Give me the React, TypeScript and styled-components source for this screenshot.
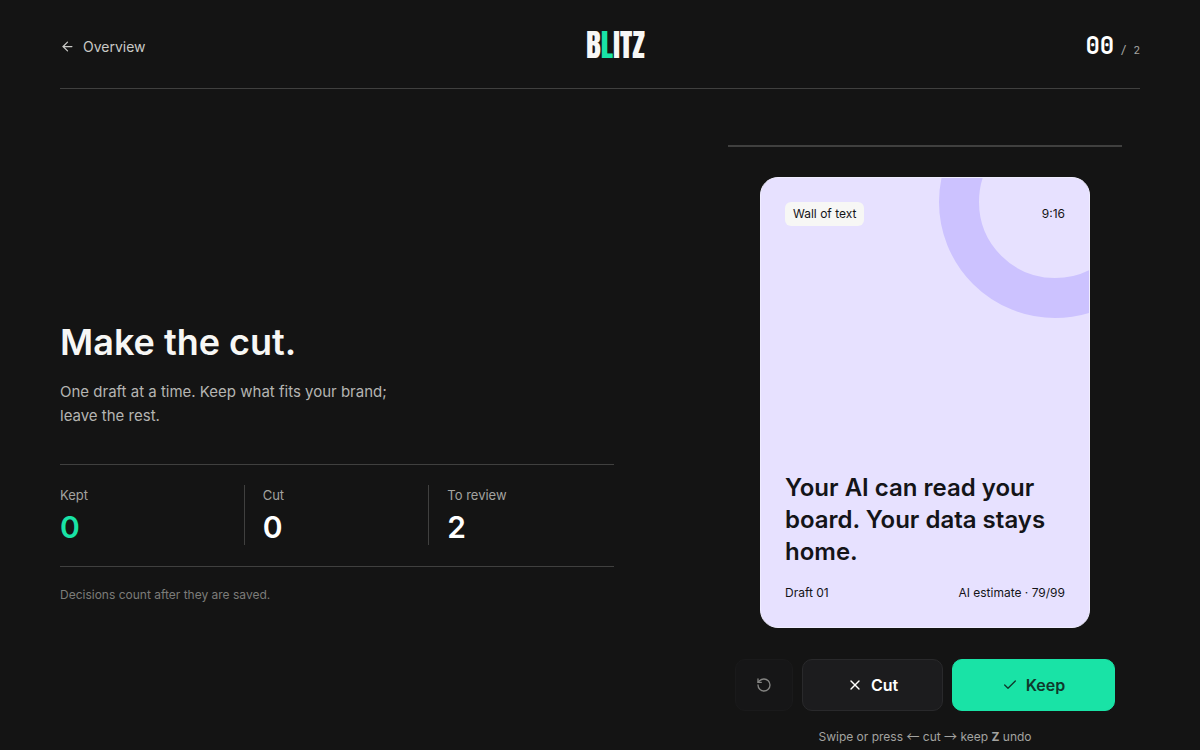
import React from "react";
import styled, { createGlobalStyle } from "styled-components";
import { ArrowLeft, Check, RotateCcw, X } from "lucide-react";

const GlobalStyle = createGlobalStyle`
  *, *::before, *::after { box-sizing: border-box; }
  body {
    margin: 0;
    background: #141414;
    color: #f7f7f5;
    font-family: Inter, "Liberation Sans", sans-serif;
  }
  h1, h2, p, dl, dd { margin: 0; }
`;

const Page = styled.div`
  min-height: 100vh;
  padding: 0 60px;
`;

const Header = styled.header`
  display: flex;
  justify-content: space-between;
  align-items: center;
  height: 89px;
  border-bottom: 1px solid #40403f;
`;

const BackLink = styled.a`
  display: flex;
  align-items: center;
  gap: 8px;
  padding-top: 5px;
  color: #c9c9c6;
  font-size: 14px;
  line-height: 20px;
  text-decoration: none;
`;

const Logo = styled.div`
  padding-top: 2px;
  font-family: Anton, "Roboto Condensed", "Liberation Sans Narrow", sans-serif;
  font-size: 31px;
  font-weight: 400;
  line-height: 36px;
  text-transform: uppercase;
`;

const LogoAccent = styled.span`
  color: #19e3a6;
`;

const Counter = styled.div`
  display: flex;
  justify-content: flex-end;
  align-items: baseline;
  gap: 6px;
  padding-top: 7px;
  font-family: "JetBrains Mono", "DejaVu Sans Mono", monospace;
  font-size: 11px;
  line-height: 32px;
  color: #a3a3a0;
`;

const CounterValue = styled.strong`
  font-size: 24px;
  color: #fff;
`;

const Main = styled.main`
  display: grid;
  grid-template-columns: minmax(0, 1fr) 430px;
  gap: 96px;
  padding-top: 56px;
`;

const Intro = styled.section`
  align-self: center;
  padding-top: 34px;
`;

const Title = styled.h1`
  font-size: 36px;
  font-weight: 600;
  line-height: 40px;
`;

const Lead = styled.p`
  max-width: 350px;
  margin-top: 18px;
  color: #b5b5b2;
  font-size: 15px;
  line-height: 24px;
`;

const Stats = styled.dl`
  display: grid;
  grid-template-columns: repeat(3, 1fr);
  margin-top: 36px;
  padding: 20px 0 21px;
  border: solid #40403f;
  border-width: 1px 0;
`;

const Stat = styled.div`
  border-right: 1px solid #40403f;

  &:last-child {
    border-right: 0;
  }

  & + & {
    padding-left: 18px;
  }
`;

const StatLabel = styled.dt`
  color: #a3a3a0;
  font-size: 13px;
  line-height: 20px;
`;

const StatValue = styled.dd<{ $accent?: boolean }>`
  margin-top: 4px;
  color: ${(p) => (p.$accent ? "#19e3a6" : "#fff")};
  font-size: 30px;
  font-weight: 600;
  line-height: 36px;
`;

const Note = styled.p`
  margin-top: 18px;
  color: #7c7c79;
  font-size: 12px;
  line-height: 20px;
`;

const Review = styled.section`
  display: flex;
  flex-direction: column;
  align-items: center;
  padding: 0 18px;
`;

const Progress = styled.div`
  width: 100%;
  height: 2px;
  background: #40403f;
`;

const Card = styled.article`
  position: relative;
  display: flex;
  flex-direction: column;
  justify-content: space-between;
  width: 330px;
  min-height: 451px;
  margin-top: 30px;
  padding: 24px;
  overflow: hidden;
  border: 1px solid #f0edff;
  border-radius: 18px;
  background: #e7e1ff;
  color: #141418;
`;

const Ring = styled.div`
  position: absolute;
  top: -92px;
  right: -82px;
  width: 232px;
  height: 232px;
  border: 40px solid #ccc2ff;
  border-radius: 50%;
`;

const CardRow = styled.div`
  position: relative;
  display: flex;
  justify-content: space-between;
  align-items: center;
  font-size: 12px;
  line-height: 20px;
`;

const Tag = styled.span`
  padding: 2px 8px;
  border-radius: 6px;
  background: #f7f7f5;
`;

const CardTitle = styled.h2`
  margin-bottom: 15px;
  font-size: 24px;
  font-weight: 600;
  line-height: 32px;
`;

const Actions = styled.div`
  display: grid;
  grid-template-columns: 58px 141fr 163fr;
  gap: 9px;
  width: 380px;
  margin-top: 31px;
`;

const Action = styled.button<{ $tone?: "keep" | "quiet" }>`
  display: flex;
  justify-content: center;
  align-items: center;
  gap: 8px;
  height: 52px;
  padding: 0;
  border: 1px solid ${(p) => (p.$tone === "keep" ? "#19e3a6" : p.$tone === "quiet" ? "#1a1a1b" : "#29292b")};
  border-radius: 10px;
  background: ${(p) => (p.$tone === "keep" ? "#19e3a6" : p.$tone === "quiet" ? "#161617" : "#1c1c1e")};
  color: ${(p) => (p.$tone === "keep" ? "#10382c" : p.$tone === "quiet" ? "#858583" : "#fff")};
  font-family: inherit;
  font-size: 16px;
  font-weight: 600;
`;

const Hint = styled.p`
  margin-top: 16px;
  color: #a3a3a0;
  font-size: 12px;
  line-height: 20px;
`;

const ArrowKey = styled.span`
  font-family: "Noto Sans CJK SC", sans-serif;
  font-size: 13px;
  line-height: 1;
`;

export default function App() {
  return (
    <>
      <GlobalStyle />
      <Page>
        <Header>
          <BackLink href="#overview">
            <ArrowLeft size={15} strokeWidth={2} />
            Overview
          </BackLink>
          <Logo>
            B<LogoAccent>L</LogoAccent>ITZ
          </Logo>
          <Counter>
            <CounterValue>00</CounterValue>
            <span>/ 2</span>
          </Counter>
        </Header>
        <Main>
          <Intro>
            <Title>Make the cut.</Title>
            <Lead>One draft at a time. Keep what fits your brand; leave the rest.</Lead>
            <Stats>
              <Stat>
                <StatLabel>Kept</StatLabel>
                <StatValue $accent>0</StatValue>
              </Stat>
              <Stat>
                <StatLabel>Cut</StatLabel>
                <StatValue>0</StatValue>
              </Stat>
              <Stat>
                <StatLabel>To review</StatLabel>
                <StatValue>2</StatValue>
              </Stat>
            </Stats>
            <Note>Decisions count after they are saved.</Note>
          </Intro>
          <Review>
            <Progress />
            <Card>
              <Ring />
              <CardRow>
                <Tag>Wall of text</Tag>
                <span>9:16</span>
              </CardRow>
              <div>
                <CardTitle>Your AI can read your board. Your data stays home.</CardTitle>
                <CardRow>
                  <span>Draft 01</span>
                  <span>AI estimate · 79/99</span>
                </CardRow>
              </div>
            </Card>
            <Actions>
              <Action $tone="quiet" aria-label="Undo">
                <RotateCcw size={16} strokeWidth={2} />
              </Action>
              <Action>
                <X size={16} strokeWidth={2} />
                Cut
              </Action>
              <Action $tone="keep">
                <Check size={16} strokeWidth={2} />
                Keep
              </Action>
            </Actions>
            <Hint>
              Swipe or press <ArrowKey>←</ArrowKey> cut <ArrowKey>→</ArrowKey> keep <b>Z</b> undo
            </Hint>
          </Review>
        </Main>
      </Page>
    </>
  );
}
